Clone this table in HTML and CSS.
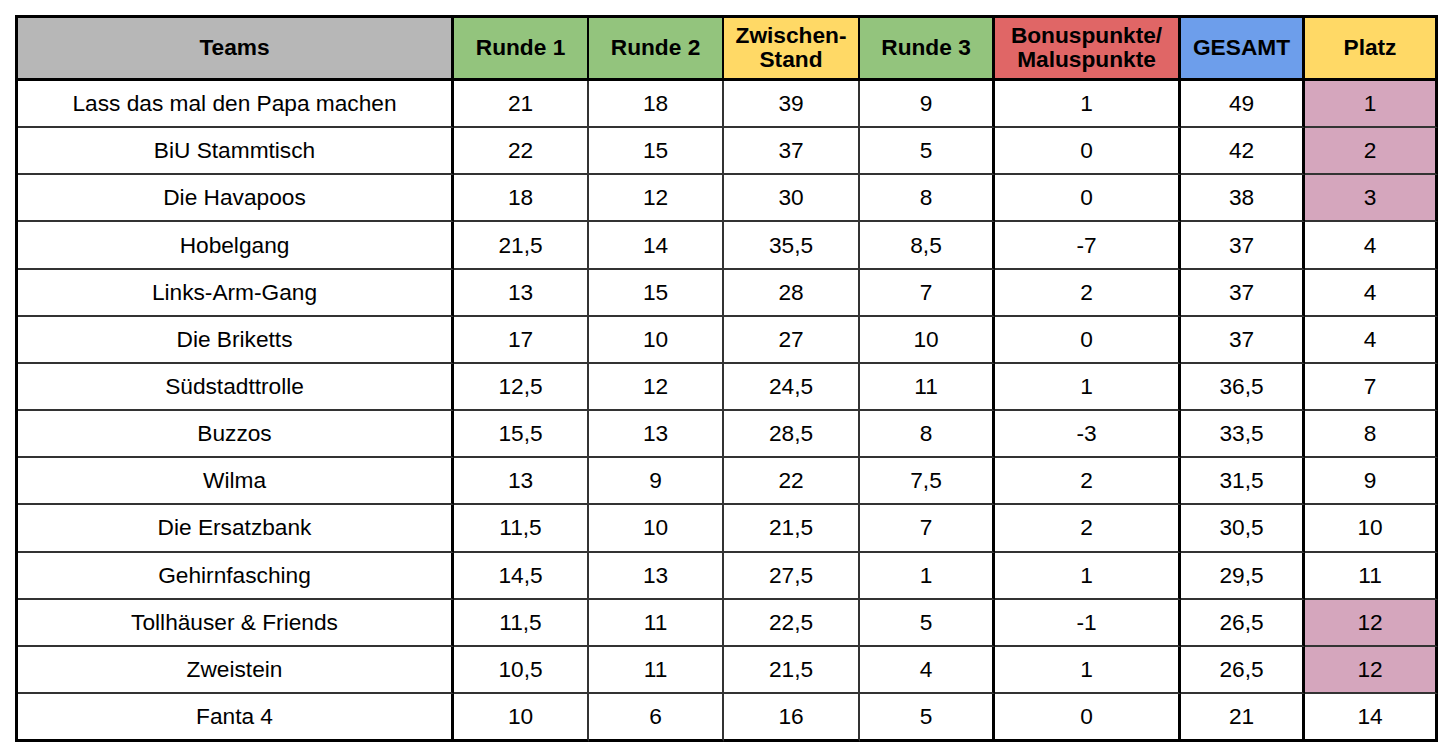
FILE: index.html
```html
<!DOCTYPE html>
<html lang="de">
<head>
<meta charset="utf-8">
<title>Ergebnisse</title>
<link rel="stylesheet" href="styles.css">
</head>
<body>
<main class="page">
  <table class="score">
    <thead>
      <tr>
        <th class="c-team h-grey">Teams</th>
        <th class="c-r1 h-green thin">Runde 1</th>
        <th class="c-r2 h-green thin">Runde 2</th>
        <th class="c-zs h-yellow thin">Zwischen-<br>Stand</th>
        <th class="c-r3 h-green">Runde 3</th>
        <th class="c-bonus h-red">Bonuspunkte/<br>Maluspunkte</th>
        <th class="c-total h-blue">GESAMT</th>
        <th class="c-rank h-yellow">Platz</th>
      </tr>
    </thead>
    <tbody>
      <tr><td>Lass das mal den Papa machen</td><td class="thin">21</td><td class="thin">18</td><td class="thin">39</td><td>9</td><td>1</td><td>49</td><td class="pink">1</td></tr>
      <tr><td>BiU Stammtisch</td><td class="thin">22</td><td class="thin">15</td><td class="thin">37</td><td>5</td><td>0</td><td>42</td><td class="pink">2</td></tr>
      <tr><td>Die Havapoos</td><td class="thin">18</td><td class="thin">12</td><td class="thin">30</td><td>8</td><td>0</td><td>38</td><td class="pink">3</td></tr>
      <tr><td>Hobelgang</td><td class="thin">21,5</td><td class="thin">14</td><td class="thin">35,5</td><td>8,5</td><td>-7</td><td>37</td><td>4</td></tr>
      <tr><td>Links-Arm-Gang</td><td class="thin">13</td><td class="thin">15</td><td class="thin">28</td><td>7</td><td>2</td><td>37</td><td>4</td></tr>
      <tr><td>Die Briketts</td><td class="thin">17</td><td class="thin">10</td><td class="thin">27</td><td>10</td><td>0</td><td>37</td><td>4</td></tr>
      <tr><td>Südstadttrolle</td><td class="thin">12,5</td><td class="thin">12</td><td class="thin">24,5</td><td>11</td><td>1</td><td>36,5</td><td>7</td></tr>
      <tr><td>Buzzos</td><td class="thin">15,5</td><td class="thin">13</td><td class="thin">28,5</td><td>8</td><td>-3</td><td>33,5</td><td>8</td></tr>
      <tr><td>Wilma</td><td class="thin">13</td><td class="thin">9</td><td class="thin">22</td><td>7,5</td><td>2</td><td>31,5</td><td>9</td></tr>
      <tr><td>Die Ersatzbank</td><td class="thin">11,5</td><td class="thin">10</td><td class="thin">21,5</td><td>7</td><td>2</td><td>30,5</td><td>10</td></tr>
      <tr><td>Gehirnfasching</td><td class="thin">14,5</td><td class="thin">13</td><td class="thin">27,5</td><td>1</td><td>1</td><td>29,5</td><td>11</td></tr>
      <tr><td>Tollhäuser &amp; Friends</td><td class="thin">11,5</td><td class="thin">11</td><td class="thin">22,5</td><td>5</td><td>-1</td><td>26,5</td><td class="pink">12</td></tr>
      <tr><td>Zweistein</td><td class="thin">10,5</td><td class="thin">11</td><td class="thin">21,5</td><td>4</td><td>1</td><td>26,5</td><td class="pink">12</td></tr>
      <tr><td>Fanta 4</td><td class="thin">10</td><td class="thin">6</td><td class="thin">16</td><td>5</td><td>0</td><td>21</td><td>14</td></tr>
    </tbody>
  </table>
</main>
</body>
</html>
```
FILE: styles.css
```css
html, body {
  margin: 0;
  padding: 0;
  background: #ffffff;
}

.page {
  padding: 15px 0 0 15px;
}

.score {
  border-collapse: separate;
  border-spacing: 0;
  table-layout: fixed;
  border-top: 3px solid #000;
  border-left: 3px solid #000;
  font-family: "Liberation Sans", Arial, sans-serif;
  font-size: 22.7px;
  color: #000;
}

.score th,
.score td {
  box-sizing: border-box;
  padding: 0;
  text-align: center;
  vertical-align: middle;
  border-right: 3px solid #000;
}

.score th {
  height: 63px;
  font-weight: bold;
  line-height: 1.04;
  border-bottom: 3px solid #000;
}

.score th.thin {
  border-right-width: 2px;
}

.score td {
  height: 47.17px;
  font-weight: normal;
  border-bottom: 2px solid #333;
}

.score td.thin {
  border-right: 2px solid #333;
}

.score tbody tr:last-child td {
  border-bottom: 3px solid #000;
  height: 48.17px;
}

.c-team { width: 436px; }
.c-r1 { width: 135px; }
.c-r2 { width: 135px; }
.c-zs { width: 136px; }
.c-r3 { width: 135px; }
.c-bonus { width: 186px; }
.c-total { width: 124px; }
.c-rank { width: 133px; }

.h-grey { background: #b7b7b7; }
.h-green { background: #93c47d; }
.h-yellow { background: #ffd966; }
.h-red { background: #e06666; }
.h-blue { background: #6d9eeb; }

.pink { background: #d5a6bd; }
```
